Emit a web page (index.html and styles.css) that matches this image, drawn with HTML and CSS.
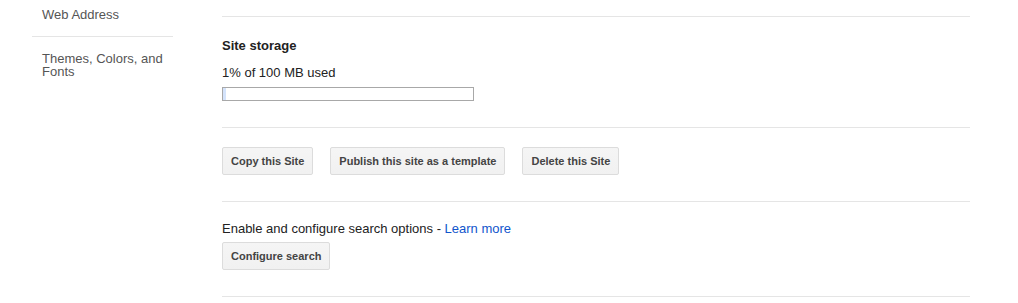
FILE: index.html
```html
<!DOCTYPE html>
<html>
<head>
<meta charset="utf-8">
<link rel="stylesheet" href="styles.css">
</head>
<body>
<div class="page">
  <nav class="sidebar">
    <div class="nav-item first">Web Address</div>
    <div class="nav-item">Themes, Colors, and Fonts</div>
  </nav>
  <main class="main">
    <div class="section top"></div>
    <div class="section storage">
      <div class="heading">Site storage</div>
      <div class="usage">1% of 100 MB used</div>
      <div class="bar"><div class="fill" style="width:1%"></div></div>
    </div>
    <div class="section actions">
      <button class="btn">Copy this Site</button>
      <button class="btn">Publish this site as a template</button>
      <button class="btn">Delete this Site</button>
    </div>
    <div class="section search">
      <div class="line">Enable and configure search options - <a href="#" class="link">Learn more</a></div>
      <button class="btn">Configure search</button>
    </div>
  </main>
</div>
</body>
</html>
```

FILE: styles.css
```css
html, body {
  margin: 0;
  padding: 0;
  background: #fff;
}
body {
  font-family: Arial, "Liberation Sans", sans-serif;
  font-size: 13px;
  color: #222;
}
.page {
  display: flex;
  align-items: flex-start;
}
.sidebar {
  margin-left: 32px;
  width: 141px;
  flex: none;
}
.nav-item {
  padding: 15px 10px 0 10px;
  line-height: 13px;
  color: #555;
}
.nav-item.first {
  padding-top: 8px;
  height: 13px;
  padding-bottom: 15px;
  border-bottom: 1px solid #e5e5e5;
}
.main {
  margin-left: 49px;
  width: 748px;
  flex: none;
}
.section {
  border-bottom: 1px solid #e5e5e5;
}
.section.top {
  height: 16px;
}
.storage {
  padding: 21px 0 26px;
}
.heading {
  font-weight: bold;
  line-height: 16px;
}
.usage {
  margin-top: 11px;
  line-height: 16px;
}
.bar {
  margin-top: 6px;
  width: 250px;
  height: 12px;
  border: 1px solid #a8a8a8;
  background: #fff;
}
.fill {
  height: 100%;
  background: #d4e3fb;
  min-width: 3px;
}
.actions {
  display: flex;
  gap: 17px;
  padding: 19px 0 26px;
}
.btn {
  font-family: Arial, "Liberation Sans", sans-serif;
  font-size: 11px;
  font-weight: bold;
  color: #444;
  height: 28px;
  line-height: 26px;
  padding: 0 8px;
  border: 1px solid #dcdcdc;
  border-radius: 2px;
  background: linear-gradient(#f5f5f5, #f1f1f1);
  margin: 0;
}
.search {
  padding: 19px 0 26px;
}
.line {
  line-height: 16px;
}
.link {
  color: #15c;
  text-decoration: none;
}
.search .btn {
  margin-top: 5px;
  display: block;
}
```
